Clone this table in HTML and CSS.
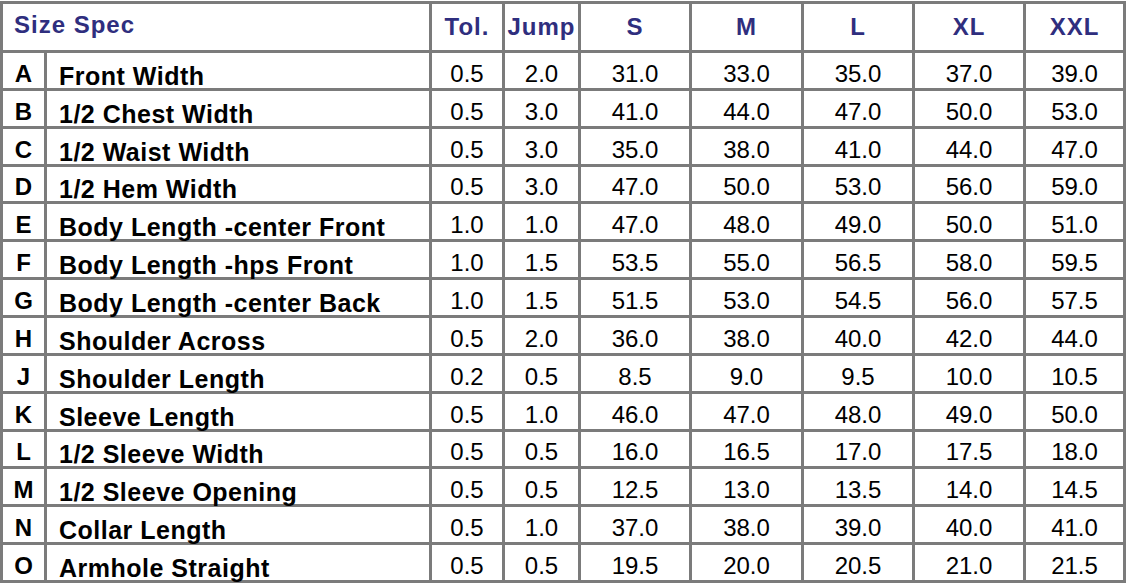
FILE: index.html
```html
<!DOCTYPE html>
<html lang="en">
<head>
<meta charset="utf-8">
<title>Size Spec</title>
<link rel="stylesheet" href="styles.css">
</head>
<body>
<div class="sheet">
  <div class="cell head title">Size Spec</div>
  <div class="cell head">Tol.</div>
  <div class="cell head">Jump</div>
  <div class="cell head">S</div>
  <div class="cell head">M</div>
  <div class="cell head">L</div>
  <div class="cell head">XL</div>
  <div class="cell head">XXL</div>

  <div class="cell key">A</div><div class="cell name">Front Width</div><div class="cell num">0.5</div><div class="cell num">2.0</div><div class="cell num">31.0</div><div class="cell num">33.0</div><div class="cell num">35.0</div><div class="cell num">37.0</div><div class="cell num">39.0</div>
  <div class="cell key">B</div><div class="cell name">1/2 Chest Width</div><div class="cell num">0.5</div><div class="cell num">3.0</div><div class="cell num">41.0</div><div class="cell num">44.0</div><div class="cell num">47.0</div><div class="cell num">50.0</div><div class="cell num">53.0</div>
  <div class="cell key">C</div><div class="cell name">1/2 Waist Width</div><div class="cell num">0.5</div><div class="cell num">3.0</div><div class="cell num">35.0</div><div class="cell num">38.0</div><div class="cell num">41.0</div><div class="cell num">44.0</div><div class="cell num">47.0</div>
  <div class="cell key">D</div><div class="cell name">1/2 Hem Width</div><div class="cell num">0.5</div><div class="cell num">3.0</div><div class="cell num">47.0</div><div class="cell num">50.0</div><div class="cell num">53.0</div><div class="cell num">56.0</div><div class="cell num">59.0</div>
  <div class="cell key">E</div><div class="cell name">Body Length -center Front</div><div class="cell num">1.0</div><div class="cell num">1.0</div><div class="cell num">47.0</div><div class="cell num">48.0</div><div class="cell num">49.0</div><div class="cell num">50.0</div><div class="cell num">51.0</div>
  <div class="cell key">F</div><div class="cell name">Body Length -hps Front</div><div class="cell num">1.0</div><div class="cell num">1.5</div><div class="cell num">53.5</div><div class="cell num">55.0</div><div class="cell num">56.5</div><div class="cell num">58.0</div><div class="cell num">59.5</div>
  <div class="cell key">G</div><div class="cell name">Body Length -center Back</div><div class="cell num">1.0</div><div class="cell num">1.5</div><div class="cell num">51.5</div><div class="cell num">53.0</div><div class="cell num">54.5</div><div class="cell num">56.0</div><div class="cell num">57.5</div>
  <div class="cell key">H</div><div class="cell name">Shoulder Across</div><div class="cell num">0.5</div><div class="cell num">2.0</div><div class="cell num">36.0</div><div class="cell num">38.0</div><div class="cell num">40.0</div><div class="cell num">42.0</div><div class="cell num">44.0</div>
  <div class="cell key">J</div><div class="cell name">Shoulder Length</div><div class="cell num">0.2</div><div class="cell num">0.5</div><div class="cell num">8.5</div><div class="cell num">9.0</div><div class="cell num">9.5</div><div class="cell num">10.0</div><div class="cell num">10.5</div>
  <div class="cell key">K</div><div class="cell name">Sleeve Length</div><div class="cell num">0.5</div><div class="cell num">1.0</div><div class="cell num">46.0</div><div class="cell num">47.0</div><div class="cell num">48.0</div><div class="cell num">49.0</div><div class="cell num">50.0</div>
  <div class="cell key">L</div><div class="cell name">1/2 Sleeve Width</div><div class="cell num">0.5</div><div class="cell num">0.5</div><div class="cell num">16.0</div><div class="cell num">16.5</div><div class="cell num">17.0</div><div class="cell num">17.5</div><div class="cell num">18.0</div>
  <div class="cell key">M</div><div class="cell name">1/2 Sleeve Opening</div><div class="cell num">0.5</div><div class="cell num">0.5</div><div class="cell num">12.5</div><div class="cell num">13.0</div><div class="cell num">13.5</div><div class="cell num">14.0</div><div class="cell num">14.5</div>
  <div class="cell key">N</div><div class="cell name">Collar Length</div><div class="cell num">0.5</div><div class="cell num">1.0</div><div class="cell num">37.0</div><div class="cell num">38.0</div><div class="cell num">39.0</div><div class="cell num">40.0</div><div class="cell num">41.0</div>
  <div class="cell key">O</div><div class="cell name">Armhole Straight</div><div class="cell num">0.5</div><div class="cell num">0.5</div><div class="cell num">19.5</div><div class="cell num">20.0</div><div class="cell num">20.5</div><div class="cell num">21.0</div><div class="cell num">21.5</div>
</div>
</body>
</html>
```

FILE: styles.css
```css
html, body {
  margin: 0;
  padding: 0;
  background: #ffffff;
}

body {
  font-family: "Liberation Sans", Arial, sans-serif;
  color: #000000;
}

.sheet {
  margin-top: 1px;
  width: 1126px;
  height: 582px;
  box-sizing: border-box;
  padding: 3px;
  background: #7b7b7b;
  display: grid;
  grid-template-columns: 41px 382px 70px 73px 108px 109px 108px 108px 97px;
  grid-template-rows: 46px repeat(14, minmax(0, 1fr));
  gap: 3px;
}

.cell {
  background: #ffffff;
  display: flex;
  align-items: center;
  justify-content: center;
  font-size: 24px;
  line-height: 20px;
  white-space: nowrap;
  min-height: 0;
}

.head {
  font-weight: bold;
  color: #2f2e7e;
  letter-spacing: 1px;
}

.title {
  grid-column: span 2;
  justify-content: flex-start;
  padding-left: 11px;
  padding-bottom: 5px;
}

.key {
  font-weight: bold;
  padding-top: 7px;
}

.name {
  font-weight: bold;
  font-size: 25px;
  align-items: flex-end;
  justify-content: flex-start;
  padding-left: 12px;
  padding-bottom: 2px;
  letter-spacing: 0.5px;
}

.num {
  padding-top: 7px;
}
```
